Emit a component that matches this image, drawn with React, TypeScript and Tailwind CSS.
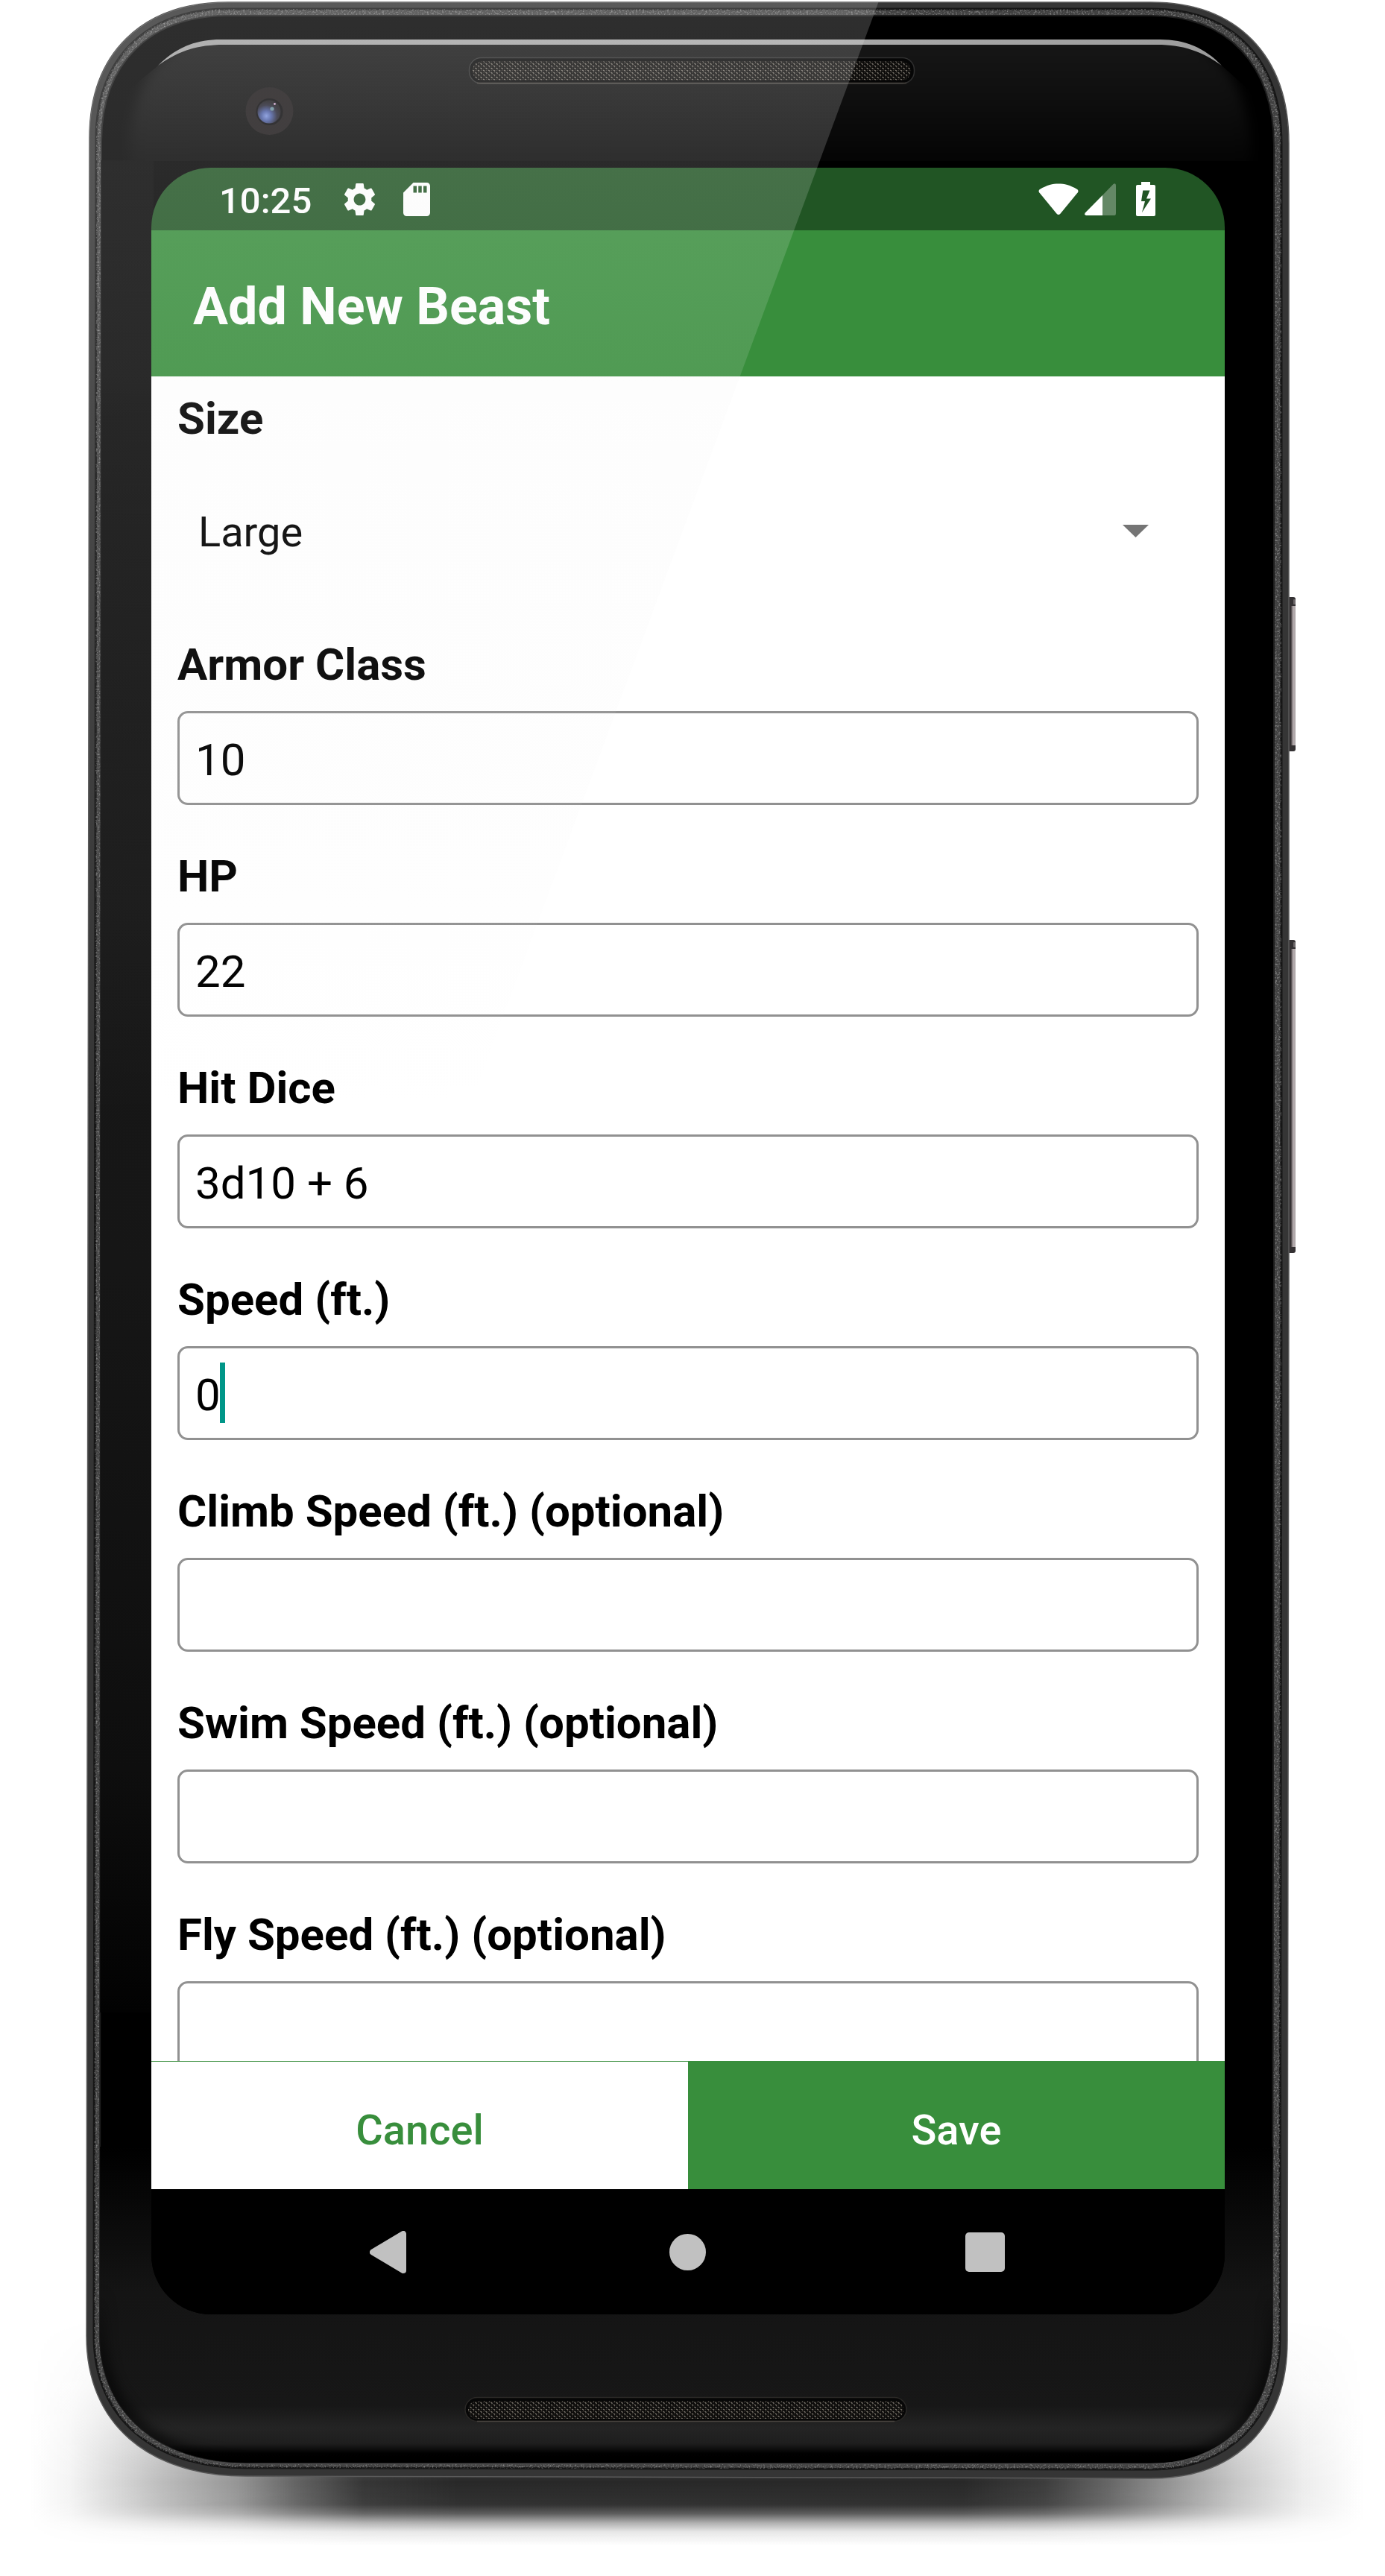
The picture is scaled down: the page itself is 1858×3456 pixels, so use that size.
import React from "react";

const OUTER =
  "M306 3 H1544 C1660 3 1729 75 1729 192 V1700 L1727 3140 C1727 3255 1658 3325 1544 3325 L330 3322 C198 3322 116 3251 116 3134 L120 185 C120 72 190 3 306 3 Z";
const MIDDLE =
  "M306 12 H1544 C1655 12 1719 80 1719 194 V1700 L1717 3138 C1717 3244 1650 3313 1544 3313 L330 3311 C206 3311 126 3244 126 3134 L129 187 C129 78 196 12 306 12 Z";
const GLASS =
  "M306 21 H1544 C1646 21 1709 86 1709 196 V1700 L1707 3136 C1707 3236 1642 3305 1544 3305 L330 3304 C214 3304 134 3237 134 3134 L136 190 C136 84 202 21 306 21 Z";

function SideKey({ y, height }: { y: number; height: number }) {
  return (
    <g>
      <rect x="1727" y={y} width="11" height={height} rx="3" fill="#343133" />
      <rect x="1733.5" y={y + 12} width="4.500" height={height - 20} fill="#b0a8aa" />
      <rect x="1732.5" y={y + 12} width="1.500" height={height - 20} fill="#7d7678" />
      <rect x="1735" y={y + 3} width="3" height="7" rx="1" fill="#6d686a" />
    </g>
  );
}

function DeviceBody() {
  return (
    <svg className="absolute inset-0" width="1858" height="3456" viewBox="0 0 1858 3456">
      <defs>
        <linearGradient id="shadowX" gradientUnits="userSpaceOnUse" x1="40" y1="0" x2="1830" y2="0">
          <stop offset="0" stopColor="#1f1f1f" stopOpacity="0" />
          <stop offset="0.03" stopColor="#1f1f1f" stopOpacity="0.05" />
          <stop offset="0.1" stopColor="#1f1f1f" stopOpacity="0.3" />
          <stop offset="0.155" stopColor="#1f1f1f" stopOpacity="0.47" />
          <stop offset="0.2" stopColor="#1f1f1f" stopOpacity="0.7" />
          <stop offset="0.25" stopColor="#1f1f1f" stopOpacity="0.9" />
          <stop offset="0.32" stopColor="#1f1f1f" stopOpacity="0.96" />
          <stop offset="0.7" stopColor="#1f1f1f" stopOpacity="0.96" />
          <stop offset="0.76" stopColor="#1f1f1f" stopOpacity="0.87" />
          <stop offset="0.81" stopColor="#1f1f1f" stopOpacity="0.68" />
          <stop offset="0.86" stopColor="#1f1f1f" stopOpacity="0.45" />
          <stop offset="0.905" stopColor="#1f1f1f" stopOpacity="0.25" />
          <stop offset="0.955" stopColor="#1f1f1f" stopOpacity="0.08" />
          <stop offset="1" stopColor="#1f1f1f" stopOpacity="0" />
        </linearGradient>
        <linearGradient id="shadowY" gradientUnits="userSpaceOnUse" x1="0" y1="3110" x2="0" y2="3415">
          <stop offset="0" stopColor="#000" />
          <stop offset="0.3" stopColor="#444" />
          <stop offset="0.62" stopColor="#ddd" />
          <stop offset="0.72" stopColor="#fff" />
          <stop offset="0.82" stopColor="#f4f4f4" />
          <stop offset="0.86" stopColor="#c0c0c0" />
          <stop offset="0.9" stopColor="#606060" />
          <stop offset="0.94" stopColor="#1c1c1c" />
          <stop offset="1" stopColor="#000" />
        </linearGradient>
        <mask id="shadowMask">
          <rect x="0" y="3110" width="1858" height="305" fill="url(#shadowY)" />
        </mask>
        <linearGradient id="face" gradientUnits="userSpaceOnUse" x1="0" y1="58" x2="0" y2="216">
          <stop offset="0" stopColor="#161616" />
          <stop offset="0.45" stopColor="#0f0f0f" />
          <stop offset="1" stopColor="#040404" />
        </linearGradient>
        <linearGradient id="shine" x1="0" y1="0" x2="1" y2="0">
          <stop offset="0" stopColor="#a2a2a2" />
          <stop offset="0.6" stopColor="#aaa" />
          <stop offset="1" stopColor="#9c9c9c" />
        </linearGradient>
        <linearGradient id="leftBezel" gradientUnits="userSpaceOnUse" x1="0" y1="215" x2="0" y2="2700">
          <stop offset="0" stopColor="#040404" />
          <stop offset="0.12" stopColor="#0c0c0c" />
          <stop offset="0.4" stopColor="#171717" />
          <stop offset="0.6" stopColor="#161616" />
          <stop offset="0.87" stopColor="#0e0e0e" />
          <stop offset="1" stopColor="#020202" />
        </linearGradient>
        <linearGradient id="chin" gradientUnits="userSpaceOnUse" x1="0" y1="2880" x2="0" y2="3304">
          <stop offset="0" stopColor="#000" />
          <stop offset="0.46" stopColor="#141414" />
          <stop offset="0.82" stopColor="#171717" />
          <stop offset="0.89" stopColor="#242424" />
          <stop offset="0.94" stopColor="#1e1e1e" />
          <stop offset="0.97" stopColor="#020202" />
          <stop offset="1" stopColor="#000" />
        </linearGradient>
        <radialGradient id="lens" cx="0.38" cy="0.68" r="0.62">
          <stop offset="0" stopColor="#7c93dc" />
          <stop offset="0.35" stopColor="#4a5ca0" />
          <stop offset="0.75" stopColor="#262636" />
          <stop offset="1" stopColor="#1d1b20" />
        </radialGradient>
        <pattern id="mesh" width="7" height="6" patternUnits="userSpaceOnUse">
          <rect width="7" height="6" fill="#0b0a09" />
          <path d="M0.5 1 L2.6 2.600 M4 4 L6.200 5.400" stroke="#7d776e" strokeWidth="1.400" />
          <path d="M4.500 1.600 L6 0.600 M0.800 5.100 L2.400 4.100" stroke="#423e38" strokeWidth="1" />
        </pattern>
        <clipPath id="glassClip">
          <path d={GLASS} />
        </clipPath>
        <clipPath id="topClip">
          <path d="M136 216 V150 L212 88 C238 69 264 60 300 60 H1552 C1588 60 1612 69 1639 88 L1709 150 V216 Z" />
        </clipPath>
        <clipPath id="chinClip">
          <rect x="130" y="3060" width="1590" height="250" />
        </clipPath>
        <linearGradient id="chinEdge" gradientUnits="userSpaceOnUse" x1="0" y1="3070" x2="0" y2="3180">
          <stop offset="0" stopColor="#000" stopOpacity="0" />
          <stop offset="1" stopColor="#000" />
        </linearGradient>
        <filter id="soft" x="-10%" y="-20%" width="120%" height="140%" colorInterpolationFilters="sRGB">
          <feGaussianBlur stdDeviation="8" />
        </filter>
        <filter id="grain" x="0" y="0" width="100%" height="100%">
          <feTurbulence type="fractalNoise" baseFrequency="0.45" numOctaves="2" seed="4" />
          <feColorMatrix values="0 0 0 0 1  0 0 0 0 1  0 0 0 0 1  1.800 0 0 0 -0.850" />
        </filter>
        <mask id="rimMask">
          <path d={MIDDLE} fill="#fff" />
          <path d={GLASS} fill="#000" />
        </mask>
      </defs>

      {/* floor shadow */}
      <rect x="40" y="3110" width="1790" height="305" fill="url(#shadowX)" mask="url(#shadowMask)" />

      <SideKey y={801} height={207} />
      <SideKey y={1261} height={420} />

      {/* metal rim */}
      <path d={OUTER} fill="#353535" stroke="#5a5a5a" strokeWidth="1.5" />
      <path d={MIDDLE} fill="#404040" stroke="#161616" strokeWidth="3" />
      <g mask="url(#rimMask)">
        <rect x="110" y="0" width="1625" height="3330" filter="url(#grain)" opacity="0.55" />
      </g>
      <path d={GLASS} fill="#000" stroke="#1d1d1d" strokeWidth="2" />

      <g clipPath="url(#glassClip)">
        <rect x="130" y="215" width="76" height="2485" fill="url(#leftBezel)" />
        <g clipPath="url(#topClip)">
          <path
            d="M174 320 V190 C178 140 192 106 216 80 L280 30 H1570 L1634 80 C1660 106 1672 140 1678 190 V320 Z"
            fill="url(#face)"
            filter="url(#soft)"
          />
        </g>
        <rect x="120" y="2880" width="1600" height="430" fill="url(#chin)" />
        <g clipPath="url(#chinClip)">
          <path d={GLASS} fill="none" stroke="url(#chinEdge)" strokeWidth="18" opacity="0.6" filter="url(#soft)" />
        </g>
      </g>
      <path
        d="M180 3262 C222 3292 274 3305.5 330 3305.5 H1544 C1590 3305.5 1630 3291 1658 3264"
        fill="none"
        stroke="#4c4c4c"
        strokeWidth="1.500"
      />

      {/* edge highlight above the earpiece */}
      <path
        d="M212 88 C236 64 262 53 296 53 H1556 C1590 53 1616 64 1639 88 C1612 69 1588 60 1552 60 H300 C264 60 238 69 212 88 Z"
        fill="url(#shine)"
      />

      {/* earpiece */}
      <rect x="629.5" y="77.5" width="597" height="34.500" rx="16" fill="#060606" stroke="#303030" strokeWidth="1.500" />
      <path d="M640 111.500 H1216" stroke="#4a4640" strokeWidth="1.500" />
      <rect x="634" y="82.500" width="588" height="25" rx="12" fill="url(#mesh)" />

      {/* bottom speaker */}
      <rect x="624" y="3216.5" width="592" height="32" rx="16" fill="#070707" stroke="#2a2826" strokeWidth="1.500" />
      <path d="M640 3248.500 H1200" stroke="#47433e" strokeWidth="1.500" />
      <rect x="628" y="3221" width="584" height="24" rx="12" fill="url(#mesh)" />

      {/* camera */}
      <circle cx="361.5" cy="149" r="32" fill="#1b1718" />
      <circle cx="361.5" cy="150" r="18" fill="#0a090b" />
      <circle cx="361" cy="150" r="15.5" fill="url(#lens)" />
      <circle cx="365" cy="146" r="2.6" fill="#6a8f9c" />
      <circle cx="368.5" cy="139.5" r="1.4" fill="#cfa6cf" />
    </svg>
  );
}

function Gloss() {
  return (
    <svg className="pointer-events-none absolute inset-0" width="1858" height="3456" viewBox="0 0 1858 3456">
      <defs>
        <linearGradient id="gloss" gradientUnits="userSpaceOnUse" x1="0" y1="0" x2="0" y2="1500">
          <stop offset="0" stopColor="#efefef" stopOpacity="0.195" />
          <stop offset="0.15" stopColor="#efefef" stopOpacity="0.178" />
          <stop offset="0.206" stopColor="#efefef" stopOpacity="0.165" />
          <stop offset="0.336" stopColor="#efefef" stopOpacity="0.132" />
          <stop offset="0.373" stopColor="#efefef" stopOpacity="0.115" />
          <stop offset="0.6" stopColor="#e8e8e8" stopOpacity="0.07" />
          <stop offset="0.77" stopColor="#e0e0e0" stopOpacity="0.04" />
          <stop offset="1" stopColor="#e0e0e0" stopOpacity="0" />
        </linearGradient>
        <clipPath id="bodyClip">
          <path d={OUTER} />
        </clipPath>
      </defs>
      <path d="M0 0 H1179.5 L624.5 1500 H0 Z" fill="url(#gloss)" clipPath="url(#bodyClip)" />
    </svg>
  );
}

function StatusBar() {
  return (
    <div className="flex h-[84px] shrink-0 items-center bg-[#215524] pr-[93px] pl-[91px] text-white">
      <span className="mt-[4px] w-[167px] text-[49px] leading-[57px] font-medium">10:25</span>
      <svg width="43" height="45" viewBox="2.2 2 19.6 20" preserveAspectRatio="none" fill="currentColor">
        <path d="M19.14 12.94c.04-.3.06-.61.06-.94 0-.32-.02-.64-.07-.94l2.03-1.58c.18-.14.23-.41.12-.61l-1.92-3.32c-.12-.22-.37-.29-.59-.22l-2.39.96c-.5-.38-1.03-.7-1.62-.94l-.36-2.54c-.04-.24-.24-.41-.48-.41h-3.84c-.24 0-.43.17-.47.41l-.36 2.54c-.59.24-1.13.57-1.62.94l-2.39-.96c-.22-.08-.47 0-.59.22L2.74 8.87c-.12.21-.08.47.12.61l2.03 1.58c-.05.3-.09.63-.09.94s.02.64.07.94l-2.03 1.58c-.18.14-.23.41-.12.61l1.92 3.32c.12.22.37.29.59.22l2.39-.96c.5.38 1.03.7 1.62.94l.36 2.54c.05.24.24.41.48.41h3.84c.24 0 .44-.17.47-.41l.36-2.54c.59-.24 1.13-.56 1.62-.94l2.39.96c.22.08.47 0 .59-.22l1.92-3.32c.12-.22.07-.47-.12-.61l-2.01-1.58zM12 15.6c-1.98 0-3.6-1.62-3.6-3.6s1.62-3.6 3.6-3.6 3.6 1.62 3.6 3.6-1.62 3.6-3.6 3.6z" />
      </svg>
      <svg className="ml-[37px]" width="36" height="45" viewBox="4 2 16 20" preserveAspectRatio="none" fill="currentColor">
        <path d="M18 2h-8L4.02 8 4 20c0 1.1.9 2 2 2h12c1.1 0 2-.9 2-2V4c0-1.100-.9-2-2-2zm-6 6h-2V4h2v4zm3 0h-2V4h2v4zm3 0h-2V4h2v4z" />
      </svg>
      <svg className="ml-auto" width="54" height="44" viewBox="0 0 54 44" fill="currentColor">
        <path d="M1.2 13.2 Q-0.200 11 1.500 9.200 C12 3 19 1.500 27 1.500 C35 1.500 42 3 52.500 9.200 Q54.200 11 52.800 13.200 L29.200 42 Q27 44 24.800 42 Z" />
      </svg>
      <svg className="ml-[8px]" width="42" height="44" viewBox="0 0 42 44" fill="currentColor">
        <path d="M24 17 L38.500 2 Q42 0 42 4 V41 Q42 44 40 44 H24 Z" opacity="0.3" />
        <path d="M24 17 V44 H2 Q-1 43 0.800 40.500 Z" />
      </svg>
      <svg className="ml-[27px]" width="26" height="46" viewBox="0 0 26 46" fill="currentColor">
        <path
          fillRule="evenodd"
          d="M7 0 H19 V4 H24 Q26 4 26 6 V44 Q26 46 24 46 H2 Q0 46 0 44 V6 Q0 4 2 4 H7 Z M9.300 11.500 L7 26 H12 L8 41 L20 22.500 H14 L18.500 11.500 Z"
        />
      </svg>
    </div>
  );
}

type FieldProps = { label: string; value?: string; focused?: boolean };

function Field({ label, value = "", focused = false }: FieldProps) {
  return (
    <div className="mb-[60px]">
      <div className="text-[60px] leading-[72px] font-bold">{label}</div>
      <div className="mt-[26px] flex h-[126px] items-center rounded-[14px] border-[3.5px] border-[#919191] pt-[6px] pl-[21px]">
        <span className="text-[60px] leading-[70px]">{value}</span>
        {focused && <span className="mb-[8px] -ml-px h-[81px] w-[7px] bg-[#009688]" />}
      </div>
    </div>
  );
}

const fields: FieldProps[] = [
  { label: "Armor Class", value: "10" },
  { label: "HP", value: "22" },
  { label: "Hit Dice", value: "3d10 + 6" },
  { label: "Speed (ft.)", value: "0", focused: true },
  { label: "Climb Speed (ft.) (optional)" },
  { label: "Swim Speed (ft.) (optional)" },
  { label: "Fly Speed (ft.) (optional)" },
];

export default function App() {
  return (
    <div className="relative h-[3456px] w-[1858px] overflow-hidden bg-white pt-[225px] pl-[203px] font-['Roboto',sans-serif]">
      <DeviceBody />

      <div className="relative flex h-[2880px] w-[1440px] flex-col overflow-hidden rounded-[80px] bg-black">
        <StatusBar />

        <header className="flex h-[196px] shrink-0 items-center bg-[#388e3c] pt-[8px] pl-[56px]">
          <h1 className="text-[70px] leading-[82px] font-bold text-white">Add New Beast</h1>
        </header>

        <main className="min-h-0 flex-1 overflow-hidden bg-white px-[35px] pt-[21px] text-black">
          <div className="text-[60px] leading-[72px] font-bold">Size</div>
          <div className="mt-[28px] mb-[55px] flex h-[175px] items-center justify-between pr-[67px] pl-[28px]">
            <span className="text-[56px] leading-[66px]">Large</span>
            <svg width="35" height="17" viewBox="0 0 35 17" className="mb-[2px]">
              <path d="M0 0 H35 L17.500 17 Z" fill="#757575" />
            </svg>
          </div>
          {fields.map((f) => (
            <Field key={f.label} {...f} />
          ))}
        </main>

        <div className="grid h-[172px] shrink-0 grid-cols-2 text-[56px] leading-[66px] font-medium">
          <button className="border-t border-[#388e3c] bg-white pt-[13px] text-[#388e3c]">Cancel</button>
          <button className="bg-[#388e3c] pt-[14px] text-white">Save</button>
        </div>

        <nav className="flex h-[168px] shrink-0 items-center justify-between bg-black pr-[295px] pl-[293px]">
          <svg width="49" height="57" viewBox="0 0 49 57">
            <path d="M4 28.500 L45 4 V53 Z" fill="#c1c1c1" stroke="#c1c1c1" strokeWidth="8" strokeLinejoin="round" />
          </svg>
          <div className="ml-[4px] h-[49px] w-[49px] rounded-full bg-[#c1c1c1]" />
          <div className="h-[53px] w-[53px] rounded-[5px] bg-[#c1c1c1]" />
        </nav>
      </div>

      <Gloss />
    </div>
  );
}
